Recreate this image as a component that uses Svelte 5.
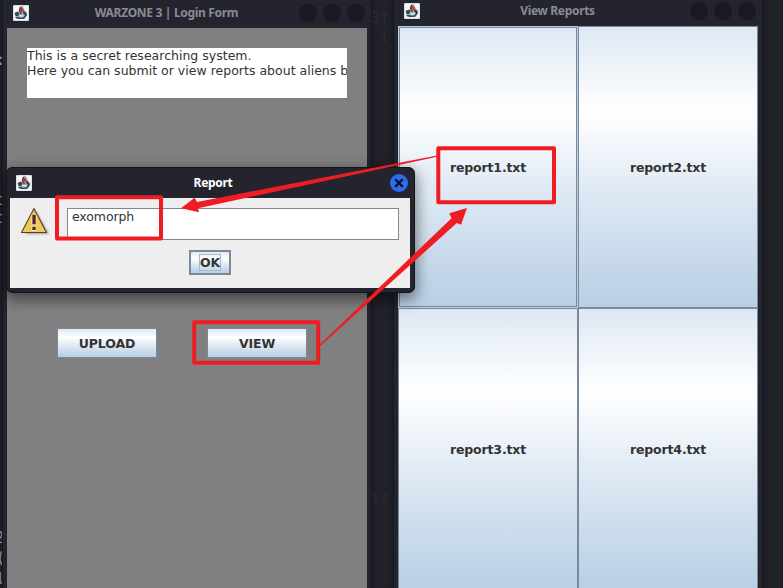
<script>
  const reports = ['report1.txt', 'report2.txt', 'report3.txt', 'report4.txt'];
  const strays = [
    { x: -4, y: 51, t: ':' },
    { x: -5, y: 191, t: 'c' },
    { x: -5, y: 209, t: 'c' },
    { x: -5, y: 529, t: '2' },
    { x: -4, y: 549, t: '(' },
    { x: -4, y: 570, t: 'l' }
  ];
</script>

{#snippet java()}
  <svg class="java" viewBox="0 0 16 16" width="16" height="16">
    <rect width="16" height="16" rx="1" fill="#d5e3ea" />
    <path d="M1 1h14v14H1z" fill="#f1f6f7" />
    <path d="M6 5l1.500-3 2.500-1 1 3 2 3 1.500 1-1 3-2 2H5L3 11l2-3z" fill="#9fb0b9" />
    <path d="M1.500 8L5 6.500l1.500 2L5 11H2.500z" fill="#39464e" />
    <path d="M6 6l.5-3.500L8.500 1l-.5 2-1 3 2 2.500-1 1z" fill="#30343b" />
    <path d="M10 6l2.500 1L14 10l-1.500 2H11l1-2-2-2z" fill="#303c43" />
    <path d="M2.500 11.500L5 12l3 .7 4-.9.5 1.200-2 1H5l-2.500-1z" fill="#3b4850" />
    <path d="M6.500 9.500l2 1 1.500-1v2H7z" fill="#eef4f5" />
    <circle cx="8.700" cy="5" r="1.900" fill="#dc262d" />
  </svg>
{/snippet}

{#snippet lights()}
  <div class="lights"><i></i><i></i><i></i></div>
{/snippet}

<main class="desktop">
  {#each strays as s}
    <span class="stray" style="left:{s.x}px;top:{s.y}px">{s.t}</span>
  {/each}

  <section class="window login">
    <header>{@render java()}<h1>WARZONE 3 | Login Form</h1>{@render lights()}</header>
    <div class="form">
      <div class="intro">This is a secret researching system.<br />Here you can submit or view reports about aliens b</div>
      <div class="actions"><button>UPLOAD</button><button>VIEW</button></div>
    </div>
  </section>

  <section class="window reports">
    <header>{@render java()}<h1>View Reports</h1>{@render lights()}</header>
    <div class="grid">
      {#each reports as name, i}
        <button class:focused={i === 0}><span>{name}</span></button>
      {/each}
    </div>
  </section>

  <span class="ghost" style="left:371px;top:9px">3f</span>
  <span class="ghost" style="left:371px;top:27px">&nbsp;(</span>
  <span class="ghost" style="left:371px;top:489px">is</span>

  <section class="dialog">
    <header>
      {@render java()}
      <h1>Report</h1>
      <svg class="close" width="18" height="18" viewBox="0 0 18 18">
        <circle cx="9" cy="9" r="9" fill="#2b6df2" />
        <path d="M6 6l6 6M12 6l-6 6" stroke="#0e1424" stroke-width="2.300" stroke-linecap="square" />
      </svg>
    </header>
    <div class="body">
      <div class="message">
        <svg class="warn" width="32" height="32" viewBox="0 0 32 32">
          <path class="shade" d="M16 5L29 28H5z" fill="#666" opacity=".6" />
          <path d="M14 2.500L26.500 26.500H1.500z" fill="#edca55" stroke="#5d3a36" stroke-width="1.100" stroke-linejoin="round" />
          <path d="M11.500 8.500h5v10.500h-5zM11.500 20h5v5h-5z" fill="#fbe7a2" />
          <path d="M12.400 8.800h3.300v9.400h-3.300zM12.400 20.700h3.300v3.200h-3.300z" fill="#55262b" />
        </svg>
        <div class="field">exomorph</div>
      </div>
      <button class="ok"><span>OK</span></button>
    </div>
  </section>

  <svg class="marks" width="783" height="588" viewBox="0 0 783 588">
    <g fill="none" stroke="#f01c24" stroke-width="4" stroke-linejoin="round">
      <rect x="57" y="197.200" width="104" height="41.200" />
      <rect x="438.300" y="148.200" width="115.700" height="54" />
      <rect x="194.200" y="322.200" width="124" height="40.600" />
    </g>
    <g fill="#f01c24">
      <path d="M437 155.500L197 202 194.500 197.800 181 208.300 199 212.200 198 208.200 437 156.800z" />
      <path d="M319 345.300L451.500 218.200 449.300 213.300 467 208 461 224.800 456.800 223 320 346.300z" />
    </g>
  </svg>
</main>

<style>
  :global(body) { margin: 0; }
  .desktop {
    position: relative; width: 783px; height: 588px; overflow: hidden;
    background: #22222b; font-family: "DejaVu Sans", sans-serif; color: #333;
  }
  button { box-sizing: border-box; margin: 0; padding: 0; font: bold 12.5px "DejaVu Sans", sans-serif; letter-spacing: -.14px; color: #333; border-radius: 0; }
  .stray, .ghost { position: absolute; font: 15px/18px "DejaVu Sans Mono", monospace; color: #c8c8cc; }
  .ghost { color: #2b2b34; }
  .window { position: absolute; box-sizing: border-box; width: 368px; background: #23242e; box-shadow: 0 0 0 1px #171820, 0 0 8px #14141b; padding: 0 4px; }
  .login { left: 3px; top: -2px; height: 600px; }
  .reports { left: 394px; top: -4px; height: 600px; }
  header { display: flex; align-items: center; height: 30px; box-sizing: border-box; }
  .java { display: block; flex: none; }
  h1 { flex: 1; margin: 0; text-align: center; font: bold 12px/18px "Noto Sans", sans-serif; letter-spacing: -.32px; color: #8a8b90; white-space: nowrap; }
  .window header { padding: 0 2px 0 6px; }
  .lights { display: flex; gap: 6px; flex: none; }
  .lights i { width: 18px; height: 18px; border-radius: 50%; background: #191a21; }
  .login h1, .reports h1 { padding-left: 5px; }
  .form { height: 560px; background: #808080; padding: 20px; box-sizing: border-box; }
  .intro { width: 320px; height: 50px; background: #fff; overflow: hidden; white-space: nowrap; font-size: 12.5px; letter-spacing: .01px; line-height: 15px; }
  .actions { display: flex; gap: 50px; padding: 230px 0 0 30px; }
  .actions button {
    width: 100px; height: 30px; border: 1px solid #7a8a99;
    background: linear-gradient(#dde8f3, #fff 30%, #dde8f3 60%, #b8cfe5);
  }
  .grid { display: grid; grid-template: 282px 282px / 180px 180px; }
  .grid button { border: 1px solid #7a8a99; background: linear-gradient(#dde8f3, #fff 30%, #dde8f3 60%, #b8cfe5); }
  .grid .focused { border-color: #b8cfe5; box-shadow: inset 0 0 0 1px #7a8a99; }
  .dialog { position: absolute; left: 6px; top: 167px; width: 400px; height: 121px; padding: 0 5px 5px 4px; background: #23242e; border-radius: 7px; box-shadow: inset 0 0 0 1px #14151b, 0 5px 14px 2px rgba(0,0,0,.45); }
  .dialog header { height: 31px; padding: 1px 2px 0 6px; }
  .dialog h1 { color: #fff; padding-left: 4px; }
  .body { height: 90px; background: #eee; display: flex; flex-direction: column; align-items: center; }
  .message { display: flex; align-self: stretch; padding: 8px 11px 0 10px; }
  .warn { flex: none; margin-right: 15px; }
  .shade { filter: blur(1.2px); }
  .field { flex: 1; box-sizing: border-box; height: 32px; margin-top: 2px; border: 1px solid #7a8a99; background: #fff; padding: 0 4px; font-size: 12.5px; letter-spacing: -.1px; line-height: 15px; }
  .ok { width: 42px; height: 25px; margin-top: 10px; border: 2px solid #7a8a99; background: linear-gradient(#dde8f3, #fff 30%, #dde8f3 60%, #b8cfe5); display: flex; align-items: center; justify-content: center; }
  .ok span { border: 1px solid #a3b8cc; line-height: 15px; }
  .marks { position: absolute; inset: 0; pointer-events: none; }
</style>
